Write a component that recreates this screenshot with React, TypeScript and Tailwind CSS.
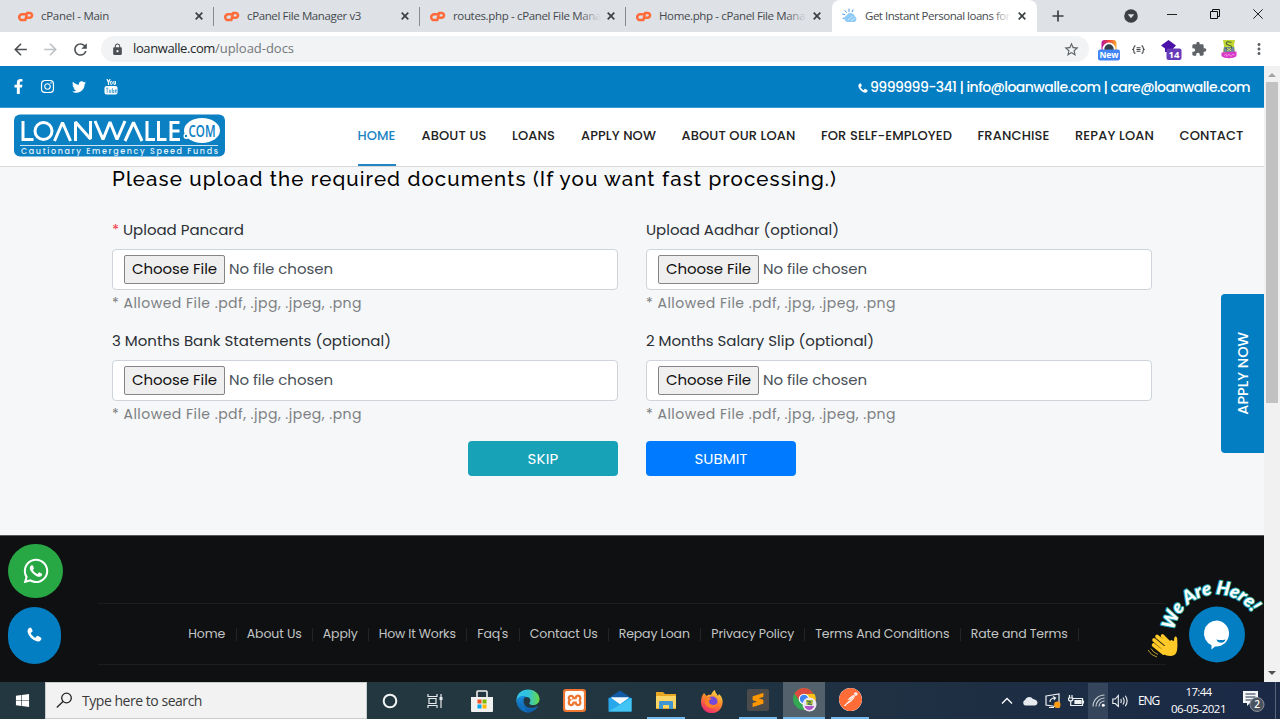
import React, { useLayoutEffect, useRef } from "react";
import { FaFacebookF, FaInstagram, FaTwitter, FaWhatsapp, FaWindows } from "react-icons/fa";
import { MdArrowBack, MdArrowForward, MdExtension, MdLock, MdMoreVert, MdRefresh, MdStarBorder } from "react-icons/md";
import { SiPostman, SiSublimetext, SiXampp } from "react-icons/si";

/** Single line of text whose letter spacing is computed so that it fills its box. */
function Fit({ className = "", children }: { className?: string; children: string }) {
  const box = useRef<HTMLSpanElement>(null);
  const line = useRef<HTMLSpanElement>(null);
  useLayoutEffect(() => {
    if (!box.current || !line.current) return;
    line.current.style.letterSpacing = "0px";
    const gap = (box.current.clientWidth - line.current.getBoundingClientRect().width) / children.length;
    line.current.style.letterSpacing = `${gap}px`;
  }, [children]);
  return (
    <span ref={box} className={`block shrink-0 whitespace-nowrap ${className}`}>
      <span ref={line} className="inline-block">{children}</span>
    </span>
  );
}

const tabs = [
  { title: "cPanel - Main", width: "w-[68px]" },
  { title: "cPanel File Manager v3", width: "w-[114px]" },
  { title: "routes.php - cPanel File Mana", width: "w-[148px]", fade: true },
  { title: "Home.php - cPanel File Mana", width: "w-[146px]", fade: true },
];

function CloseMark() {
  return (
    <svg className="size-[8px] shrink-0" viewBox="0 0 8 8" stroke="#3c4043" strokeWidth="1.7">
      <path d="M.7.7l6.6 6.6M7.3.7L.7 7.3" />
    </svg>
  );
}

function CpanelMark() {
  return (
    <svg className="h-[11px] w-[16px] shrink-0" viewBox="0 0 16 11" fill="none" stroke="#ff6c3a" strokeWidth="2.5" strokeLinecap="round" strokeLinejoin="round">
      <path d="M7 3.300H4.100a2.900 2.900 0 000 5.800h1.900" />
      <path d="M7.400 9.100L9 1.900h2.600a2.400 2.400 0 010 4.900H9.800" />
    </svg>
  );
}

function Handset({ className = "" }: { className?: string }) {
  return (
    <svg className={className} viewBox="0 0 14 14" fill="currentColor">
      <path d="M13.500 10.500q0 .6-.5 1.600-1 1.400-2.900 1.400-1.400 0-3.700-1.300Q3.500 10.500 1.800 7.600.5 5.300.5 3.900.5 2 1.900 1q1-.5 1.600-.5.300 0 1 1.400.7 1.300.8 1.800 0 .5-.9 1.200-.9.600-.9.900 0 .5 1.700 2.300t2.500 1.900q.3 0 .9-.9t1.100-.9q.5.100 2 .9 1.800 1 1.800 1.400z" />
    </svg>
  );
}

function TabStrip() {
  return (
    <div className="flex h-[32px] bg-[#dee1e6] pl-[8px] text-[#45494d]">
      {tabs.map((t, i) => (
        <div key={t.title} className="flex w-[206px] shrink-0 items-center pl-[10px]">
          <CpanelMark />
          <div className="relative ml-[7px] w-[148px] overflow-hidden">
            <Fit className={`text-[11.5px] leading-[18px] ${t.width}`}>{t.title}</Fit>
            {t.fade && <div className="absolute top-0 right-0 h-full w-[22px] bg-linear-to-r from-transparent to-[#dee1e6]" />}
          </div>
          <div className="ml-[6px]"><CloseMark /></div>
          {i < 3 && <div className="ml-auto h-[19px] w-px bg-[#878b90]" />}
        </div>
      ))}
      <div className="flex w-[205px] shrink-0 items-center rounded-t-[8px] bg-white pl-[10px]">
        <svg className="size-[16px] shrink-0" viewBox="0 0 16 16">
          <path d="M5 14a3.500 3.500 0 01-.5-6.500A4.600 4.600 0 0113 8.600a3 3 0 01-.6 5.400z" fill="#8ecbf7" />
          <g stroke="#4a9be8" strokeWidth="1" strokeLinecap="round"><path d="M7 1v2.500M3 2.500l1.300 1.800M.6 6l2.200.7M11 1.800l-.8 2M1 10.500l1.500-.5" /></g>
          <path d="M6 12l5-4M9 13l4-3" stroke="#c5e5fd" strokeWidth="1" />
        </svg>
        <div className="relative ml-[7px] w-[146px] overflow-hidden">
          <Fit className="w-[145px] text-[11.5px] leading-[18px]">Get Instant Personal loans for</Fit>
          <div className="absolute top-0 right-0 h-full w-[20px] bg-linear-to-r from-transparent to-white" />
        </div>
        <div className="ml-[7px]"><CloseMark /></div>
      </div>
      <svg className="mt-[10px] ml-[15px] size-[12px]" viewBox="0 0 12 12" stroke="#3c4043" strokeWidth="1.700"><path d="M6 .5v11M.5 6h11" /></svg>
      <div className="ml-auto flex h-[32px] items-center pr-[17px] text-[#222]">
        <svg className="mr-[29px] size-[14px]" viewBox="0 0 14 14"><circle cx="7" cy="7" r="6.800" fill="#3c4043" /><path d="M3.800 5.300h6.400L7 9.200z" fill="#dee1e6" /></svg>
        <svg className="mr-[33px] mb-[4px] h-[10px] w-[10px]" viewBox="0 0 10 10"><path d="M0 5.500h10" stroke="#222" /></svg>
        <svg className="mr-[33px] mb-[5px] size-[10px]" viewBox="0 0 10 10" fill="none" stroke="#111"><path d="M.5 2.500h7v7h-7zM2.500 2.500v-2h7v7h-2" /></svg>
        <svg className="mb-[5px] size-[10px]" viewBox="0 0 10 10" stroke="#222"><path d="M.3.3l9.400 9.400M9.700.3L.3 9.700" /></svg>
      </div>
    </div>
  );
}

function Toolbar() {
  return (
    <div className="flex h-[34px] items-center bg-white text-[#5f6368]">
      <MdArrowBack className="ml-[11px] size-[19px] text-[#4c5054]" />
      <MdArrowForward className="ml-[11px] size-[19px] text-[#bdc1c6]" />
      <MdRefresh className="ml-[11px] size-[19px] text-[#4c5054]" />
      <div className="ml-[11px] flex h-[26px] w-[988px] items-center rounded-full bg-[#f1f3f4] pr-[9px] pl-[10px]">
        <MdLock className="size-[13px] text-[#4c5054]" />
        <Fit className="ml-[9px] w-[82px] text-[13px] text-[#26282b]">loanwalle.com</Fit>
        <Fit className="w-[79px] text-[13px] text-[#73777b]">/upload-docs</Fit>
        <MdStarBorder className="ml-auto size-[17px]" />
      </div>
      <svg className="ml-[8px] h-[24px] w-[24px]" viewBox="0 0 24 24">
        <defs><linearGradient id="insta" x2="1" y2="0"><stop stopColor="#b5179e" /><stop offset=".5" stopColor="#f0433a" /><stop offset="1" stopColor="#fbb034" /></linearGradient></defs>
        <rect x="4.500" y="3" width="15" height="15" rx="3" fill="url(#insta)" />
        <circle cx="12" cy="12" r="6.500" fill="#fff" /><circle cx="12" cy="12" r="4.700" fill="#33404d" />
        <rect x="1" y="12.500" width="22" height="11" rx="2" fill="#4285f4" />
        <text x="12" y="21" textAnchor="middle" fontSize="8.500" fontWeight="700" fill="#fff" fontFamily="Open Sans, sans-serif">New</text>
      </svg>
      <svg className="ml-[11px] h-[9px] w-[13px]" viewBox="0 0 14 10" fill="none" stroke="#3c4043" strokeWidth="1.200">
        <path d="M3.600 1q-1.600 0-1.600 1.500T.8 5Q2 5.500 2 7.500T3.600 9M10.400 1q1.600 0 1.600 1.500T13.200 5Q12 5.500 12 7.500T10.400 9M4.800 3h4.400M4.800 5h4.400M4.800 7h4.400" />
      </svg>
      <svg className="ml-[15px] size-[22px]" viewBox="0 0 22 22">
        <path d="M1 7.500l7.500-5.500L16 7.500l-3 3V14H5v-3.500z" fill="#4a12a8" />
        <rect x="6.500" y="10.500" width="15" height="11.500" rx="2" fill="#673ab7" />
        <text x="14" y="19.600" textAnchor="middle" fontSize="9.500" fontWeight="700" fill="#fff" fontFamily="Open Sans, sans-serif">14</text>
      </svg>
      <MdExtension className="ml-[9px] size-[16px]" />
      <svg className="ml-[14px] h-[20px] w-[16px]" viewBox="0 0 16 20">
        <path d="M2 1h12l-1 5 1 8H2l1-7z" fill="#c3d62f" />
        <path d="M3 8h10l.6 5H2.400z" fill="#6c86a2" />
        <path d="M10.500 3.500c-3-1.500-6-.5-5 1.500s5 .5 5 3-4 2.500-6 1" fill="none" stroke="#4c6a3f" strokeWidth="1.200" />
        <path d="M6 9l4 3M10 9l-4 3" stroke="#d9e56c" strokeWidth="1" />
        <path d="M.5 13.500l15-1v4.500c-3 3-12 3-15 0z" fill="#d837c7" />
        <path d="M3 16.500l2-1.500 1 2.500 2-2.500 2 2.500 2-2.500 1.500 1.500" fill="none" stroke="#f2a0ea" strokeWidth=".8" />
      </svg>
      <MdMoreVert className="ml-[13px] size-[18px]" />
    </div>
  );
}

function TopBar() {
  return (
    <div className="flex h-[42px] shrink-0 items-center border-b border-[#3f9bd0] bg-[#047ec2] text-white">
      <FaFacebookF className="ml-[11px] size-[15px]" />
      <FaInstagram className="ml-[14px] size-[15px]" />
      <FaTwitter className="ml-[17px] size-[14px]" />
      <svg className="ml-[18px] h-[16px] w-[14px]" viewBox="0 0 14 16">
        <rect x=".5" y="7" width="13" height="8.500" rx="2" fill="#fff" />
        <path d="M3 0l1.500 3.400V6M6 0L4.500 3.400" fill="none" stroke="#fff" strokeWidth="1.200" />
        <rect x="6.400" y="2.300" width="1.800" height="3.200" rx=".8" fill="none" stroke="#fff" />
        <path d="M9.900 2v3.300h1.500V2" fill="none" stroke="#fff" />
        <path d="M2 9.200h2.400M3.200 9.200V14M5.400 10.500v3h1.400v-3M8.400 9v4.700h1.300v-2.600H8.500M12.600 12.200h-1.400v-1.400h1.200v1.200M11.200 12v1.600h1.300" fill="none" stroke="#047ec2" strokeWidth=".6" />
      </svg>
      <Handset className="mt-[2px] ml-auto size-[10px]" />
      <Fit className="mr-[14px] ml-[2px] w-[380px] pt-[2px] text-[14px] font-medium">9999999-341 | info@loanwalle.com | care@loanwalle.com</Fit>
    </div>
  );
}

function Logo() {
  return (
    <svg className="h-[43px] w-[211px] shrink-0" viewBox="0 0 211 43">
      <rect width="211" height="42" y=".5" rx="6" fill="#0b80c3" />
      <g fill="none" stroke="#fff" strokeWidth="3">
        <path d="M9 7v18.500h10.500" /><circle cx="29.500" cy="17" r="8.500" />
        <path d="M40.500 27L48.500 8.500 56.500 27" strokeLinejoin="bevel" />
        <path d="M61.500 27V8l15 17V7" strokeLinejoin="bevel" />
        <path d="M81 7l8 18.500L96 8l7 17.500L111 7M111 27l8.500-18.500L128 27" strokeLinejoin="bevel" />
        <path d="M133 7v18.500h8M144.500 7v18.500h8M165.500 8.500h-8.500v17h9M157 17h8.500" />
      </g>
      <ellipse cx="188" cy="16.500" rx="18" ry="12.500" fill="#fff" />
      <circle cx="172.500" cy="22" r="3" fill="#fff" />
      <text x="174.500" y="22.500" textLength="27" lengthAdjust="spacingAndGlyphs" fontSize="16" fontWeight="600" fill="#0b80c3" fontFamily="Open Sans, sans-serif">COM</text>
      <circle cx="172" cy="22" r="1.200" fill="#0b80c3" />
      <path d="M6 31.500h198" stroke="#fff" strokeWidth=".8" />
      <text x="7" y="39.800" textLength="197" fontSize="8" fontWeight="500" fill="#e6f3fb" fontFamily="Poppins, sans-serif">Cautionary Emergency Speed Funds</text>
    </svg>
  );
}

const nav = [
  { label: "ABOUT US", width: "w-[64.500px]" },
  { label: "LOANS", width: "w-[43px]" },
  { label: "APPLY NOW", width: "w-[74.500px]" },
  { label: "ABOUT OUR LOAN", width: "w-[113.500px]" },
  { label: "FOR SELF-EMPLOYED", width: "w-[130.500px]" },
  { label: "FRANCHISE", width: "w-[71.500px]" },
  { label: "REPAY LOAN", width: "w-[78.500px]" },
  { label: "CONTACT", width: "w-[64px]" },
];

function MainNav() {
  return (
    <header className="flex h-[59px] shrink-0 border-b border-[#d6d8da] bg-white pr-[20.500px] pl-[14px] text-[13px] font-medium text-[#222]">
      <div className="mt-[6px]"><Logo /></div>
      <nav className="ml-auto flex gap-[26px] leading-[56px]">
        <div className="h-[58px] border-b-2 border-[#2285c3] text-[#2285c3]"><Fit className="w-[38px]">HOME</Fit></div>
        {nav.map((n) => <Fit key={n.label} className={n.width}>{n.label}</Fit>)}
      </nav>
    </header>
  );
}

const fields = [
  { label: "Upload Pancard", width: "w-[121px]", required: true },
  { label: "Upload Aadhar (optional)", width: "w-[193px]" },
  { label: "3 Months Bank Statements (optional)", width: "w-[279px]" },
  { label: "2 Months Salary Slip (optional)", width: "w-[228px]" },
];

function UploadForm() {
  return (
    <main className="h-[368px] shrink-0 bg-[#f5f7f9] px-[112px]">
      <h1 className="font-['Raleway','Lato',sans-serif] text-[20.500px] leading-[24px] font-medium text-black">
        <Fit className="w-[725px]">Please upload the required documents (If you want fast processing.)</Fit>
      </h1>
      <div className="mt-[27px] grid grid-cols-[506px_506px] gap-x-[28px] text-[15px] text-[#2b3035]">
        {fields.map((f) => (
          <div key={f.label} className="h-[111.400px]">
            <div className="flex h-[31px] leading-[23px]">
              {f.required && <span className="w-[11px] text-[#f23a48]">*</span>}
              <Fit className={f.width}>{f.label}</Fit>
            </div>
            <div className="flex h-[41px] items-center rounded-[4px] border border-[#ced4da] bg-white pl-[11px]">
              <button className="flex h-[29px] w-[101px] items-center justify-center rounded-[2px] border border-[#858585] bg-[#efefef] pb-px text-[15px] text-[#111]">
                <Fit className="w-[85px]">Choose File</Fit>
              </button>
              <Fit className="ml-[4px] w-[104px] pb-px text-[#495057]">No file chosen</Fit>
            </div>
            <Fit className="w-[250px] pt-px text-[14px] leading-[25px] text-[#7d8082]">* Allowed File .pdf, .jpg, .jpeg, .png</Fit>
          </div>
        ))}
      </div>
      <div className="mt-[0.700px] flex justify-center gap-[28px] text-[15px] text-white">
        <button className="flex h-[35px] w-[150px] items-center justify-center rounded-[4px] bg-[#17a2b8]"><Fit className="w-[31px]">SKIP</Fit></button>
        <button className="flex h-[35px] w-[150px] items-center justify-center rounded-[4px] bg-[#007bff]"><Fit className="w-[53px]">SUBMIT</Fit></button>
      </div>
    </main>
  );
}

const links = [
  { label: "Home", width: "w-[37px]" },
  { label: "About Us", width: "w-[54.500px]" },
  { label: "Apply", width: "w-[34.500px]" },
  { label: "How It Works", width: "w-[77px]" },
  { label: "Faq's", width: "w-[31px]" },
  { label: "Contact Us", width: "w-[67.500px]" },
  { label: "Repay Loan", width: "w-[71px]" },
  { label: "Privacy Policy", width: "w-[82.500px]" },
  { label: "Terms And Conditions", width: "w-[134px]" },
  { label: "Rate and Terms", width: "w-[96.500px]" },
];

function Footer() {
  return (
    <footer className="grow border-t border-[#55595b] bg-[#0e1011] px-[98px] pt-[67px]">
      <div className="flex h-[62px] items-center border-y border-[#1b1d1e] pl-[80px] text-[12.500px] text-[#c3c5c6]">
        {links.map((l) => (
          <div key={l.label} className="flex h-[13px] items-center border-r border-[#222526] px-[10.250px]"><Fit className={`pt-px ${l.width}`}>{l.label}</Fit></div>
        ))}
      </div>
    </footer>
  );
}

function ChatBadge() {
  return (
    <svg className="absolute top-[508px] left-[1144px] h-[94px] w-[120px]" viewBox="0 0 120 94">
      <defs><path id="arc" d="M30 56.500 A43 43 0 0 1 114 52" /></defs>
      <circle cx="73" cy="60.500" r="28" fill="#047ec2" />
      <path d="M73 46.500a13 13 0 11-2 26l-3.500 3v-4.200A13 13 0 0173 46.500z" fill="#fff" />
      <path d="M72.500 65.500q4.500 1 9 0-1 3.200-4.500 3.200t-4.500-3.200z" fill="#047ec2" />
      <text fontSize="18.500" fontWeight="900" fontStyle="italic" fontFamily="Lato, sans-serif" fill="#fff" stroke="#21a2aa" strokeWidth="2" paintOrder="stroke" strokeLinejoin="round">
        <textPath href="#arc" textLength="102">We Are Here!</textPath>
      </text>
      <g strokeLinecap="round" fill="none" stroke="#ffc928" strokeWidth="3.600">
        <path d="M9.500 71l10 8M10 66l12 10M13 62.500l12 10M18.500 62l9 9" />
      </g>
      <path d="M16 76l11-10 3 1q0-5 1.800-4.500 1.700.5 1.500 5 .5 5-.3 9-1 5-6 5.500-4 .3-8-2z" fill="#ffc928" />
      <path d="M4 76q3 5.500 9 7M7 74.500q2 4 7 6" stroke="#c09a2f" fill="none" strokeWidth="1" />
    </svg>
  );
}

function Page() {
  return (
    <div className="relative flex h-[616px] overflow-hidden font-['Poppins','Inter',sans-serif]">
      <div className="flex w-[1264px] flex-col">
        <TopBar />
        <MainNav />
        <UploadForm />
        <Footer />
      </div>
      <div className="flex w-[16px] flex-col items-center bg-[#f1f1f1]">
        <svg className="h-[16px] w-[8px]" viewBox="0 0 8 16"><path d="M0 11l4-4 4 4z" fill="#a3a3a3" /></svg>
        <div className="h-[321px] w-[12px] bg-[#c1c1c1]" />
        <svg className="mt-auto h-[16px] w-[8px]" viewBox="0 0 8 16"><path d="M0 5l4 4 4-4z" fill="#505050" /></svg>
      </div>
      <div className="absolute top-[228px] left-[1221px] flex h-[159px] w-[43px] items-center justify-center rounded-l-[4px] bg-[#047ec2] text-[14.500px] font-medium text-white">
        <div className="rotate-180 pr-[2px] [writing-mode:vertical-rl]">APPLY NOW</div>
      </div>
      <div className="absolute top-[478px] left-[8px] flex h-[54px] w-[55px] items-center justify-center rounded-full bg-[#28a745] text-white"><FaWhatsapp className="size-[28px]" /></div>
      <div className="absolute top-[541px] left-[8px] flex h-[57px] w-[53px] items-center justify-center rounded-full bg-[#047ec2] pb-[2px] text-white"><Handset className="size-[15px]" /></div>
      <ChatBadge />
    </div>
  );
}

function ChromeLogo() {
  return (
    <svg className="size-[27px]" viewBox="0 0 27 27">
      <circle cx="13" cy="13" r="11" fill="#34a853" />
      <path d="M3.500 7.500a11 11 0 0119 0L13 8.500 8.500 15z" fill="#dd4b3e" />
      <path d="M13 8h10.500A11 11 0 0113 24l5-8z" fill="#fbc116" />
      <circle cx="13" cy="13" r="5.300" fill="#fff" /><circle cx="13" cy="13" r="4.200" fill="#4285f4" />
      <circle cx="18.500" cy="18.500" r="7" fill="#ece9f2" />
      <path d="M15 14h7l-.5 5h-6z" fill="#a6bd3c" /><path d="M16 15l4 1-3 2 4 1" fill="none" stroke="#456a52" />
      <path d="M13.500 20h9.800q-2 4-5 4-3.500 0-4.800-4z" fill="#b454cb" />
    </svg>
  );
}

const apps: { name: string; cell: string; icon: React.ReactNode }[] = [
  { name: "cortana", cell: "w-[38px]", icon: <svg className="size-[16px]" viewBox="0 0 16 16"><circle cx="8" cy="8" r="6.300" fill="none" stroke="#f2f4f5" strokeWidth="2" /></svg> },
  { name: "tasks", cell: "w-[38px] pr-[3px]", icon: <svg className="size-[16px]" viewBox="0 0 16 16" fill="none" stroke="#e8ebed" strokeWidth="1.200"><path d="M1 1v2.500h9V1M1 15v-2.500h9V15M2 5.500h7v5H2zM14 1v3M14 7v8" /><path d="M14 4v3" strokeWidth="3" /></svg> },
  { name: "store", cell: "w-[38px]", icon: <svg className="size-[24px]" viewBox="0 0 24 24"><path d="M7 9V3q0-1 1-1h8q1 0 1 1v6" fill="none" stroke="#f1f1f1" strokeWidth="1.600" /><path d="M1 8h22v14q0 1-1 1H2q-1 0-1-1z" fill="#f1f1f1" /><path d="M7.500 10.500h4v4h-4z" fill="#f25022" /><path d="M12.500 10.500h4v4h-4z" fill="#7fba00" /><path d="M7.500 15.500h4v4h-4z" fill="#00a4ef" /><path d="M12.500 15.500h4v4h-4z" fill="#ffb900" /></svg> },
  { name: "edge", cell: "w-[38px]", icon: <svg className="size-[24px]" viewBox="0 0 24 24"><defs><linearGradient id="edgeA"><stop stopColor="#36c6e8" /><stop offset=".5" stopColor="#2fc2df" /><stop offset="1" stopColor="#66d944" /></linearGradient><linearGradient id="edgeB" x2="0" y2="1"><stop stopColor="#1b8fdb" /><stop offset="1" stopColor="#0c59a4" /></linearGradient></defs><path d="M.5 11C1 4 6 .5 12 .5c7 0 11.500 4.500 11.500 9.500 0 4-3 6-6.500 6-4 0-4-2-3-3 1-2 0-5-3.500-5C6 8 3 9 .5 13z" fill="url(#edgeA)" /><path d="M.5 12C1 8 6 6 10 7.500 6 9 6.500 19 15 19c3 0 5-1 7-2-2 4-6 6.500-10 6.500C5 23.500.5 18 .5 12z" fill="url(#edgeB)" /><path d="M10 7.500C4 11 6.500 22 13.500 23.500 7 24 4 18 5 14s3-6 5-6.500z" fill="#1475c2" /></svg> },
  { name: "xampp", cell: "w-[38px]", icon: <span className="flex size-[23px] items-center justify-center rounded-[3px] bg-[#ee7631]"><SiXampp className="size-[19px] text-white" /></span> },
  { name: "mail", cell: "w-[38px]", icon: <svg className="size-[24px]" viewBox="0 0 24 24"><path d="M.5 9L12 1.500 23.500 9v4H.5z" fill="#0f5ba5" /><path d="M.5 9h23v13.500H.5z" fill="#28a8ea" /><path d="M3 8.500h18L12 15z" fill="#f4f8fb" /><path d="M23.500 9v13.500H.5z" fill="#42c4f5" /><path d="M3 8.500h18L12 15z" fill="#f4f8fb" /></svg> },
  { name: "files", cell: "w-[38px] border-b-2 border-[#76b9ed]", icon: <svg className="size-[22px]" viewBox="0 0 22 22"><path d="M1 3h7l2 2h11v15H1z" fill="#e7a722" /><path d="M1 7h20v12H1z" fill="#fbd566" /><path d="M4 20v-7q0-1 1-1h12q1 0 1 1v7h-4v-4H8v4z" fill="#3f96d0" /></svg> },
  { name: "firefox", cell: "w-[38px]", icon: <svg className="size-[24px]" viewBox="0 0 24 24"><defs><linearGradient id="fox" x1=".8" y1="0" x2=".3" y2="1"><stop stopColor="#ffe14b" /><stop offset=".45" stopColor="#ff8a28" /><stop offset="1" stopColor="#e92571" /></linearGradient></defs><path d="M4 4l2.500 3C8 5.500 10 5.500 11 6c1-3 3-4.500 4-5 0 3 2 3.500 3 6l1-2c3 3 4 5.500 3.500 9A10.500 10.500 0 011 13c0-4 1-6.500 3-9z" fill="url(#fox)" /><circle cx="12.500" cy="12.500" r="5" fill="#7249d8" /><path d="M5 9q5-1 7 1-3 0-3 2.500T13 16q4 0 4.500-3Q17 19 12 19t-7-5z" fill="#ff8127" /></svg> },
  { name: "sublime", cell: "w-[38px] border-b-2 border-[#76b9ed]", icon: <span className="flex size-[22px] items-center justify-center rounded-[2px] bg-[#4b4b4b]"><SiSublimetext className="size-[14px] text-[#ff9800]" /></span> },
  { name: "chrome", cell: "w-[42px] border-b-2 border-[#76b9ed] bg-[#52616c]", icon: <ChromeLogo /> },
  { name: "postman", cell: "w-[38px] border-b-2 border-[#76b9ed]", icon: <SiPostman className="size-[23px] rounded-full bg-white text-[#ff6c37]" /> },
];

function Taskbar() {
  return (
    <div className="flex h-[37px] bg-linear-to-r from-[#22373f] from-40% to-[#1b2946] text-white">
      <div className="flex w-[45px] items-center justify-center"><FaWindows className="size-[15px]" /></div>
      <div className="flex w-[322px] items-center border border-[#c9cccd] bg-[#f2f2f2] pl-[10px] text-[#3a3a3a]">
        <svg className="size-[17px]" viewBox="0 0 17 17" fill="none" stroke="#222" strokeWidth="1.300"><circle cx="10.500" cy="6" r="4.800" /><path d="M7 9.500L.8 15.500" /></svg>
        <Fit className="ml-[9px] w-[120px] text-[14px]">Type here to search</Fit>
      </div>
      {apps.map((a) => (
        <div key={a.name} className="flex w-[46px] justify-center">
          <div className={`flex shrink-0 items-center justify-center ${a.cell}`}>{a.icon}</div>
        </div>
      ))}
      <div className="ml-auto flex items-center">
        <svg className="mr-[9px] h-[8px] w-[12px]" viewBox="0 0 12 8" fill="none" stroke="#fff" strokeWidth="1.300"><path d="M1 6.500l5-5 5 5" /></svg>
        <svg className="mr-[7px] h-[10px] w-[16px]" viewBox="0 0 16 10"><path d="M3 9.500a3 3 0 010-5.500A4.500 4.500 0 0111 3q4 .5 4.500 3.500-.3 3-3 3z" fill="#e6e9ed" /></svg>
        <svg className="mr-[7px] size-[16px]" viewBox="0 0 16 16" fill="none" stroke="#eef0f2" strokeWidth="1.200"><path d="M1 3l13-2v13L1 12zM4 14.500h5M5 9q0-4 5-4M8 3.500L10.500 5 9 7" /><circle cx="12.300" cy="11.800" r="3.200" fill="#ff9c12" stroke="none" /></svg>
        <svg className="mr-[4px] h-[12px] w-[16px]" viewBox="0 0 16 12" fill="none" stroke="#eef0f2" strokeWidth="1.200"><path d="M4.500 3.500h10v7h-9M15.500 5.500v3M1.500 0v3M4 0v3M.5 3h4.200v2q-2 2-4.200 0zM2.700 6v4.500h3" /><path d="M7 5.500h6v3H7z" fill="#eef0f2" /></svg>
        <div className="flex h-[36px] w-[20px] items-center justify-center bg-[#35455b]">
          <svg className="size-[13px]" viewBox="0 0 13 13" fill="none" stroke="#c7cdd4" strokeWidth="1.100"><path d="M1 12.500A11.500 11.500 0 0112.500 1M4 12.500A8.500 8.500 0 0112.500 4M7 12.500A5.500 5.500 0 0112.500 7" /><circle cx="11.300" cy="11.300" r="1.500" fill="#fff" stroke="none" /></svg>
        </div>
        <svg className="mr-[9px] ml-[4px] h-[14px] w-[17px]" viewBox="0 0 17 14" fill="none" stroke="#eef0f2" strokeWidth="1.100"><path d="M.8 5h2.500l3-3.500v11L3.300 9.500H.8zM8.700 5q1.200 2 0 4M11 3.500q2.300 3.500 0 7M13.300 1.800q3.700 5.200 0 10.400" /></svg>
        <Fit className="mr-[12px] w-[21px] text-[12px]">ENG</Fit>
        <div className="flex w-[55px] flex-col items-center pb-[2px] text-[11.500px] leading-[17px]">
          <Fit className="w-[26px]">17:44</Fit>
          <Fit className="w-[55px]">06-05-2021</Fit>
        </div>
        <svg className="ml-[16px] size-[23px]" viewBox="0 0 23 23"><path d="M1 2h15v12H8l-3 3v-3H1z" fill="#f5f6f8" /><path d="M3.500 5h10M3.500 8h10M3.500 11h7" stroke="#202e48" /><circle cx="15" cy="15.500" r="7" fill="#4b535e" stroke="#8a909a" /><text x="15" y="19" fontSize="10" fontWeight="600" textAnchor="middle" fill="#fff" fontFamily="Open Sans, sans-serif">2</text></svg>
        <div className="ml-[10px] h-[37px] w-px bg-[#59647a]" />
        <div className="w-[4px]" />
      </div>
    </div>
  );
}

export default function App() {
  return (
    <div className="flex h-[719px] w-[1280px] flex-col overflow-hidden font-['Segoe_UI','Open_Sans',sans-serif]">
      <TabStrip />
      <Toolbar />
      <Page />
      <Taskbar />
    </div>
  );
}
